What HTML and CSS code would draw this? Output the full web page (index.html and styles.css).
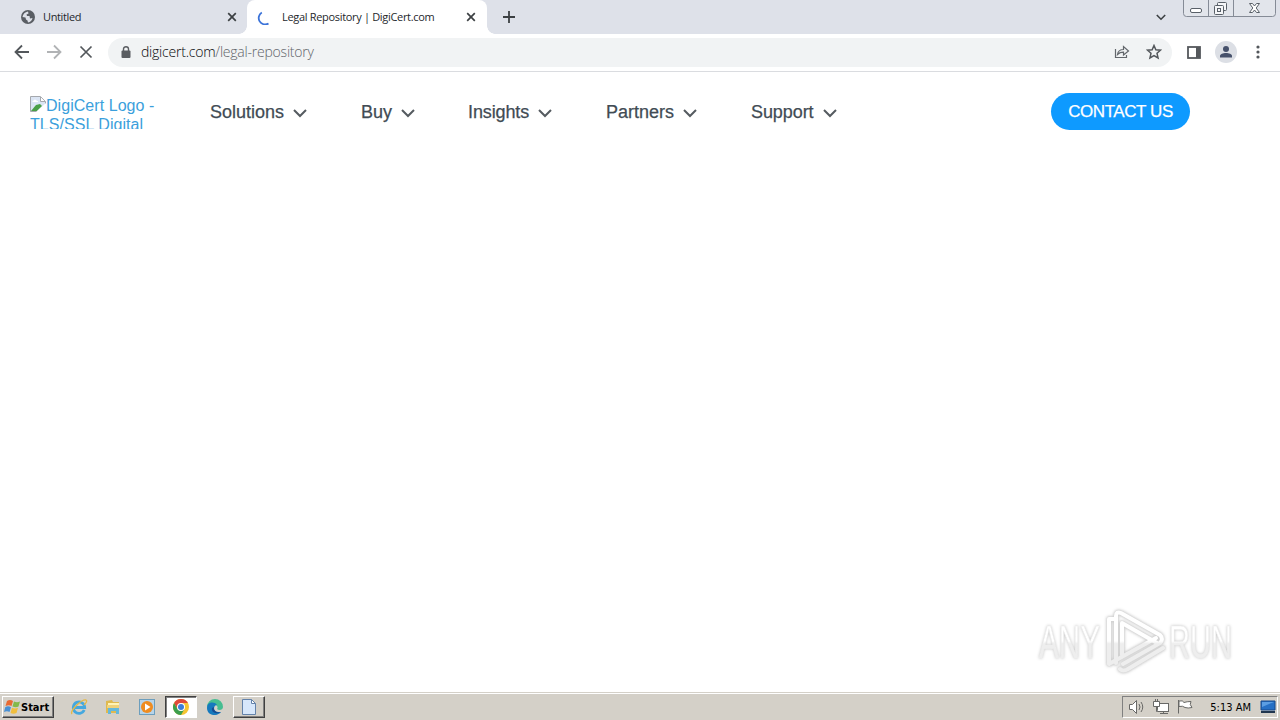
FILE: index.html
```html
<!DOCTYPE html>
<html lang="en">
<head>
<meta charset="utf-8">
<title>Legal Repository | DigiCert.com</title>
<link rel="stylesheet" href="styles.css">
</head>
<body>
<div class="screen">
  <div class="tabstrip">
    <div class="tab">
      <svg class="favicon" width="14" height="14" viewBox="0 0 14 14"><circle cx="7" cy="7" r="7" fill="#5a5e64"/><path d="M1.500 7C2 4 4 2 7 1.500L7.500 3.500 5.500 4.500 6 6 8.500 6 9 8.500 11.500 8C11 10.500 9.500 12 7 12.500L6.500 10.500 5 9.500 4.500 7.500z" fill="#dee1e9"/></svg>
      <span class="tab-title untitled">Untitled</span>
      <svg class="close" width="10" height="10" viewBox="0 0 10 10"><path d="M1.200 1.200l7.600 7.600M8.800 1.200L1.200 8.800" stroke="#3c4043" stroke-width="1.700"/></svg>
    </div>
    <div class="tab active">
      <svg class="favicon" width="16" height="16" viewBox="0 0 16 16"><path d="M5.800 3.500A6.200 6.200 0 0 0 12.500 14.500" fill="none" stroke="#3b73d9" stroke-width="1.800"/></svg>
      <span class="tab-title legal">Legal Repository | DigiCert.com</span>
      <svg class="close" width="10" height="10" viewBox="0 0 10 10"><path d="M1.200 1.200l7.600 7.600M8.800 1.200L1.200 8.800" stroke="#3c4043" stroke-width="1.700"/></svg>
    </div>
    <svg class="newtab" width="12" height="12" viewBox="0 0 12 12"><path d="M6 0v12M0 6h12" stroke="#3c4043" stroke-width="1.800"/></svg>
    <svg class="tabsearch" width="10" height="7" viewBox="0 0 10 7"><path d="M.8 1l4.200 4.200L9.200 1" fill="none" stroke="#3c4043" stroke-width="1.600"/></svg>
    <svg class="winbuttons" width="94" height="18" viewBox="0 0 94 18"><path d="M.5-1V13.500Q.5 16.500 3.500 16.500H89.500Q92.500 16.500 92.500 13.500V-1M25.500 0V16M50.500 0V16" fill="#e2e5eb" stroke="#858b96"/><rect x="7.500" y="8.500" width="11" height="4" rx="1.500" fill="#fff" stroke="#596068"/><g fill="#f5f6f8" stroke="#596068"><rect x="34.500" y="2.500" width="9" height="8" rx="1"/><rect x="31.500" y="5.500" width="9" height="9" rx="1"/><rect x="34.500" y="8.500" width="3" height="3"/></g><path d="M66.500 3.500h3l2 2.500 2-2.500h3l-3.300 4.500 3.300 4.500h-3l-2-2.500-2 2.500h-3l3.300-4.500z" fill="#fff" stroke="#596068"/></svg>
  </div>
  <div class="toolbar">
    <svg class="navicons" width="80" height="16" viewBox="0 0 80 16"><g fill="none" stroke="#53575b" stroke-width="1.800"><path d="M15 8H2M8 1.500L1.500 8 8 14.500"/><path d="M33 8H46M40 1.500L46.500 8 40 14.500" stroke="#b1b3b5"/><path d="M66.500 2.500l11 11M77.500 2.500L66.500 13.500" stroke-width="1.700"/></g></svg>
    <div class="omnibox">
      <svg class="lock" width="10" height="13" viewBox="0 0 10 13"><rect y="4.500" x=".5" width="9" height="7.500" rx="1" fill="#5a5d61"/><path d="M2.500 5V3a2.500 2.300 0 0 1 5 0v2" fill="none" stroke="#5a5d61" stroke-width="1.400"/></svg>
      <span class="url"><b>digicert.com</b>/legal-repository</span>
      <svg class="share" width="16" height="14" viewBox="0 0 16 14"><path d="M1.500 4V12.500H12.500V10M3.500 9.500C4 6 6.500 4.500 9.500 4.500V1.500L14.500 6 9.500 10V7.200C7 7.200 5 8 3.500 9.500z" fill="none" stroke="#63676c" stroke-width="1.200"/></svg>
      <svg class="star" width="16" height="16" viewBox="0 0 16 16"><path d="M8 1.500l1.850 4.300 4.650.4L11 9.300l1.050 4.600L8 11.500l-4.050 2.400L5 9.300 1.500 6.200l4.650-.4z" fill="none" stroke="#53575b" stroke-width="1.500"/></svg>
    </div>
    <svg class="panel" width="14" height="13" viewBox="0 0 14 13"><rect x="1" y="1" width="12" height="11" fill="#fff" stroke="#55585c" stroke-width="1.800"/><path d="M9 1h4v11H9z" fill="#55585c"/></svg>
    <svg class="avatar" width="22" height="22" viewBox="0 0 22 22"><circle cx="11" cy="11" r="11" fill="#dcdfe5"/><circle cx="11" cy="8" r="3" fill="#46516b"/><path d="M5 16.500v-1.500c0-2 3-3 6-3s6 1 6 3v1.500z" fill="#46516b"/></svg>
    <svg class="dots" width="4" height="14" viewBox="0 0 4 14"><g fill="#53575b"><circle cx="2" cy="2" r="1.600"/><circle cx="2" cy="7" r="1.600"/><circle cx="2" cy="12" r="1.600"/></g></svg>
  </div>
  <main class="page">
    <header class="site-header">
      <a class="logo"><svg class="broken" width="16" height="16" viewBox="0 0 16 16"><path d="M.5.500h10l5 5v10H.5z" fill="#dbe5f4" stroke="#a5a8ad"/><path d="M1 15l5-6 4-1 2 2-5 5z" fill="#4aa047"/><path d="M3 5q2-3 4 0h1v1H2z" fill="#fff"/><path d="M6 16L16 7v9z" fill="#fff"/><path d="M10.500 1v4.500H15" fill="#fff" stroke="#a5a8ad"/></svg>DigiCert Logo - TLS/SSL Digital</a>
      <nav class="menu">
        <a class="item solutions"><span>Solutions</span><svg width="14" height="9" viewBox="0 0 14 9"><path d="M1 1l6 6 6-6" fill="none" stroke="#555b60" stroke-width="2"/></svg></a>
        <a class="item buy"><span>Buy</span><svg width="14" height="9" viewBox="0 0 14 9"><path d="M1 1l6 6 6-6" fill="none" stroke="#555b60" stroke-width="2"/></svg></a>
        <a class="item insights"><span>Insights</span><svg width="14" height="9" viewBox="0 0 14 9"><path d="M1 1l6 6 6-6" fill="none" stroke="#555b60" stroke-width="2"/></svg></a>
        <a class="item partners"><span>Partners</span><svg width="14" height="9" viewBox="0 0 14 9"><path d="M1 1l6 6 6-6" fill="none" stroke="#555b60" stroke-width="2"/></svg></a>
        <a class="item support"><span>Support</span><svg width="14" height="9" viewBox="0 0 14 9"><path d="M1 1l6 6 6-6" fill="none" stroke="#555b60" stroke-width="2"/></svg></a>
      </nav>
      <a class="contact">CONTACT US</a>
    </header>
    <svg class="watermark" width="216" height="76" viewBox="0 0 216 76">
      <defs><linearGradient id="fade" gradientUnits="userSpaceOnUse" x1="0" y1="4" x2="0" y2="72"><stop offset=".5" stop-color="#fff"/><stop offset=".54" stop-color="#eee"/></linearGradient></defs>
      <g class="mark" fill="url(#fade)">
        <text x="9" y="55" textLength="61" lengthAdjust="spacingAndGlyphs">ANY</text>
        <text x="139" y="55" textLength="63" lengthAdjust="spacingAndGlyphs">RUN</text>
        <g class="ribbon" fill="none" stroke="url(#fade)">
          <path d="M86 60V13Q86 8 91 10L130 32Q134 36 130 40L93 61"/>
          <path d="M92 52V20L127 40"/>
          <path d="M85 16L79 16V61L126 35"/>
          <path d="M90 66Q93 69 98 66L133 45"/>
        </g>
      </g>
    </svg>
  </main>
  <footer class="taskbar">
    <div class="start"><svg width="17" height="16" viewBox="0 0 17 16"><path d="M3 2q3-2 6 0L7.500 7Q5 5.500 1.500 7z" fill="#e96a32"/><path d="M10 2.500q3 1.500 6 0L14.500 7.500Q12 9 8.500 7.500z" fill="#83b94a"/><path d="M1.200 8.200Q4 6.500 7 8.200L5.500 13Q3 11.500 0 13z" fill="#4990d4"/><path d="M8 8.800q3 1.500 6 0L12.500 14q-3 1.500-6 0z" fill="#f0be3d"/></svg><span>Start</span></div>
    <div class="task ie"><svg width="18" height="18" viewBox="0 0 18 18"><path d="M14.200 12A5.700 5.700 0 1 1 14.700 9.500H5" fill="none" stroke="#45a8df" stroke-width="2.800"/><path d="M2 16C-1 13 12 1 16 2c2 1-1 4-2 5" fill="none" stroke="#e6b945" stroke-width="1.300"/></svg></div>
    <div class="task"><svg width="16" height="16" viewBox="0 0 16 16"><path d="M1 2l6-1 1 2h6v11H1z" fill="#dfb94f"/><path d="M3 4h11v7H3z" fill="#fff3b6"/><path d="M3 15V9h11v6h-3v-3H6v3z" fill="#65b8db"/><path d="M2 6h12v3H2z" fill="#f0d27a"/></svg></div>
    <div class="task"><svg width="16" height="16" viewBox="0 0 16 16"><rect x=".5" y=".5" width="15" height="15" fill="#b7d4e9" stroke="#6c9ebd"/><circle cx="8" cy="8" r="6" fill="#ef8c20"/><path d="M6 4.500L11.500 8 6 11.500z" fill="#fff"/></svg></div>
    <div class="task pressed"><svg width="16" height="16" viewBox="0 0 16 16"><circle cx="8" cy="8" r="8" fill="#f6c431"/><path d="M1.070 4A8 8 0 0 1 14.930 4H8L4.500 10z" fill="#df493b"/><path d="M1.070 4A8 8 0 0 0 8 16l3.500-6L8 12 4.500 10z" fill="#3b9e4d"/><circle cx="8" cy="8" r="4" fill="#fff"/><circle cx="8" cy="8" r="3" fill="#3c7dd9"/></svg></div>
    <div class="task"><svg width="16" height="16" viewBox="0 0 16 16"><path d="M0 8a8 8 0 0 1 16 0c0 3-4 4-6 2 3-4-6-7-10-2z" fill="#46bd91"/><path d="M0 9C0 3 7 2 10 6c-4 0-5 8 4 7-4 5-14 4-14-4z" fill="#1679bd"/><path d="M5 9c-1 4 4 7 9 4-4 1-8-1-7-5z" fill="#164b91"/></svg></div>
    <div class="task raised"><svg width="14" height="16" viewBox="0 0 14 16"><path d="M.5.500h9l4 4v11H.5z" fill="#d7e7fb" stroke="#6382aa"/><path d="M9.500.500v4h4z" fill="#fff" stroke="#6382aa"/></svg></div>
    <div class="tray">
      <svg width="66" height="16" viewBox="0 0 66 16"><g fill="#fff" stroke="#686866"><path d="M1.500 5.500h3l4-4v13l-4-4h-3z"/><path d="M11 5q2 3 0 6M13 3q3.500 5 0 10" fill="none"/><rect x="29.500" y="4.500" width="11" height="8"/><path d="M32 14.500h8M35.500 12.500v2M25.500 2.500h6v5h-6zM27.500 0v2.500M29.500 0v2.500M28.500 7.500v5h1"/><path d="M50.500 14.500V1M51 2q4-1 5 1.500 3-1 7-1-2 3 1 6-4 1-7 0-2-2-6-1z"/></g></svg>
      <span class="clock">5:13 AM</span>
      <svg width="16" height="14" viewBox="0 0 16 14"><path d="M1 1h14v9H1z" fill="#2670c5" stroke="#17498a"/><path d="M2 2h12L2 7z" fill="#5b9ee3"/><path d="M1 11h14v2H1z" fill="#21364f"/></svg>
    </div>
  </footer>
</div>
</body>
</html>
```
FILE: styles.css
```css
* { box-sizing: border-box; }
body { margin: 0; background: #fff; }
svg { display: block; flex: none; }
.screen { width: 1280px; height: 720px; display: flex; flex-direction: column; overflow: hidden; }
.tabstrip { height: 34px; flex: none; display: flex; background: #dee1e9; }
.tab { width: 247px; height: 34px; display: flex; align-items: center; padding: 0 10px 0 21px; font: 11px/16px "Open Sans", sans-serif; color: #25282c; white-space: nowrap; }
.tab .close { margin-left: auto; }
.favicon { margin-right: 8px; }
.tab.active { width: 240px; padding: 0 11px 0 9px; background: #fff; border-radius: 8px 8px 0 0; position: relative; }
.active .favicon { margin-right: 10px; }
.active::before, .active::after { content: ""; position: absolute; bottom: 0; width: 8px; height: 8px; }
.active::before { left: -8px; background: radial-gradient(circle at 0 0, #dee1e9 7.500px, #fff 8px); }
.active::after { right: -8px; background: radial-gradient(circle at 100% 0, #dee1e9 7.500px, #fff 8px); }
.legal { letter-spacing: -.32px; }
.untitled { letter-spacing: -.38px; }
.newtab { margin: 11px 0 0 16px; }
.tabsearch { margin: 14px 17px 0 auto; }
.winbuttons { margin-right: 3px; }
.toolbar { height: 38px; flex: none; display: flex; align-items: center; padding-bottom: 1px; border-bottom: 1px solid #dadce0; background: #fff; }
.navicons { margin-left: 14px; }
.omnibox { width: 1064px; height: 29px; margin-left: 14px; padding: 0 10px 0 13px; display: flex; align-items: center; border-radius: 15px; background: #f1f3f4; }
.url { margin-left: 10px; font: 300 14px/20px "Open Sans", sans-serif; letter-spacing: -.22px; color: #5f6368; white-space: nowrap; }
.url b { font-weight: 300; color: #050608; }
.share { margin-left: auto; margin-right: 16px; }
.panel { margin-left: 15px; }
.avatar { margin-left: 14px; }
.dots { margin-left: 19px; }
.page { flex: 1; display: flex; flex-direction: column; justify-content: space-between; }
.site-header { display: flex; font-family: "Liberation Sans", Arial, sans-serif; }
.logo { width: 136px; height: 33px; margin: 24px 0 0 30px; overflow: hidden; color: #3b9fdc; font-size: 16px; line-height: 19px; letter-spacing: .05px; }
.broken { display: inline-block; vertical-align: top; }
.menu { display: flex; margin: 30px 0 0 44px; color: #414b54; font-size: 18px; line-height: 20px; -webkit-text-stroke: .25px #414b54; }
.item { display: flex; justify-content: space-between; }
.item svg { margin-top: 7px; }
.solutions { width: 97px; margin-right: 54px; }
.buy { width: 54px; margin-right: 53px; }
.insights { width: 84px; margin-right: 54px; letter-spacing: -.12px; }
.partners { width: 91px; margin-right: 54px; }
.support { width: 86px; letter-spacing: -.08px; }
.contact { width: 139px; height: 37px; margin: 21px 90px 0 auto; border-radius: 19px; background: #0e9aff; color: #fff; font-size: 17px; line-height: 37px; letter-spacing: -.42px; text-align: center; -webkit-text-stroke: .25px #fff; }
.watermark { align-self: flex-end; margin: 0 34px 13px 0; }
.mark { font: 46px "Liberation Sans", sans-serif; stroke: #eee; stroke-width: .6px; filter: drop-shadow(0 0 1.500px #c4c4c4); }
.ribbon { stroke-width: 4px; stroke-linejoin: round; stroke-linecap: round; filter: drop-shadow(0 0 .8px #d4d4d4); }
.taskbar { height: 28px; flex: none; display: flex; align-items: center; padding: 1px 2px 0; background: #d4d0c8; border-top: 1px solid #d4d0c8; box-shadow: inset 0 1px #fff; }
.start { width: 52px; height: 22px; display: flex; align-items: center; padding-left: 1px; border: 1px solid; border-color: #fff #404040 #404040 #fff; box-shadow: inset -1px -1px #808080; font: bold 11px "DejaVu Sans Condensed", "DejaVu Sans", sans-serif; color: #000; letter-spacing: 0; }
.task { width: 32px; height: 22px; margin-right: 2px; display: flex; align-items: center; justify-content: center; }
.ie { margin-left: 9px; }
.pressed { background: #fff; border: 1px solid; border-color: #404040 #fff #fff #404040; box-shadow: inset 1px 1px #808080; }
.raised { border: 1px solid; border-color: #fff #404040 #404040 #fff; box-shadow: inset -1px -1px #808080; }
.tray { width: 156px; height: 22px; margin-left: auto; display: flex; align-items: center; padding: 0 1px 0 5px; border: 1px solid; border-color: #808080 #fff #fff #808080; }
.clock { margin-left: auto; margin-right: 9px; font: 11px "DejaVu Sans Condensed", sans-serif; letter-spacing: 0; white-space: nowrap; color: #000; }
```
